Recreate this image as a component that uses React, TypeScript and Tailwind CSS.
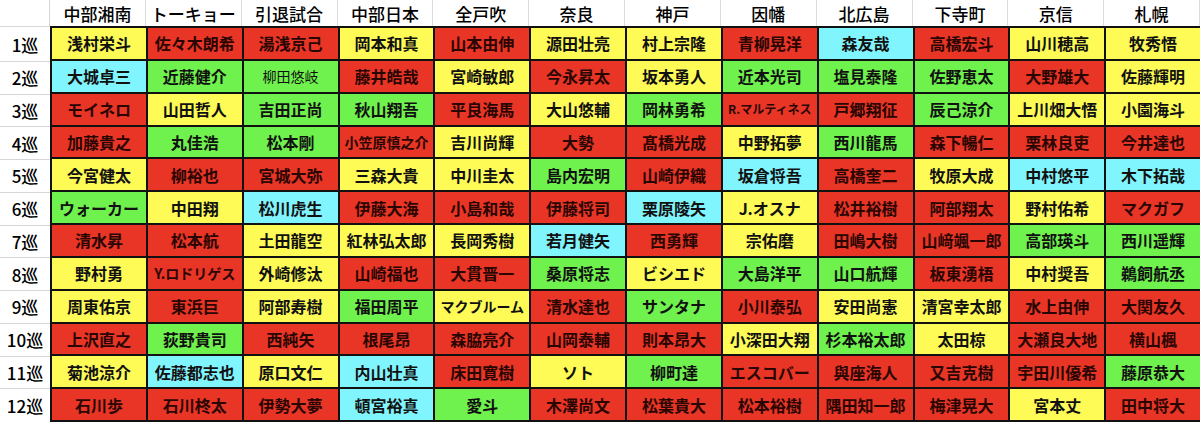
import React from "react";

type C = "Y" | "R" | "G" | "C";
type Cell = [string, C, string?];

const headers = ["中部湘南", "トーキョー", "引退試合", "中部日本", "全戸吹", "奈良", "神戸", "因幡", "北広島", "下寺町", "京信", "札幌"];

const rows: Cell[][] = [
  [["浅村栄斗", "Y"], ["佐々木朗希", "R"], ["湯浅京己", "R"], ["岡本和真", "Y"], ["山本由伸", "R"], ["源田壮亮", "Y"], ["村上宗隆", "Y"], ["青柳晃洋", "R"], ["森友哉", "C"], ["高橋宏斗", "R"], ["山川穂高", "Y"], ["牧秀悟", "Y"]],
  [["大城卓三", "C"], ["近藤健介", "G"], ["柳田悠岐", "G", "s14"], ["藤井皓哉", "R"], ["宮崎敏郎", "Y"], ["今永昇太", "R"], ["坂本勇人", "Y"], ["近本光司", "G"], ["塩見泰隆", "G"], ["佐野恵太", "G"], ["大野雄大", "R"], ["佐藤輝明", "Y"]],
  [["モイネロ", "R"], ["山田哲人", "Y"], ["吉田正尚", "G"], ["秋山翔吾", "G"], ["平良海馬", "R"], ["大山悠輔", "Y"], ["岡林勇希", "G"], ["R.マルティネス", "R", "s12"], ["戸郷翔征", "R"], ["辰己涼介", "G"], ["上川畑大悟", "Y"], ["小園海斗", "Y"]],
  [["加藤貴之", "R"], ["丸佳浩", "G"], ["松本剛", "G"], ["小笠原慎之介", "R", "s13"], ["吉川尚輝", "Y"], ["大勢", "R"], ["髙橋光成", "R"], ["中野拓夢", "Y"], ["西川龍馬", "G"], ["森下暢仁", "R"], ["栗林良吏", "R"], ["今井達也", "R"]],
  [["今宮健太", "Y"], ["柳裕也", "R"], ["宮城大弥", "R"], ["三森大貴", "Y"], ["中川圭太", "Y"], ["島内宏明", "G"], ["山崎伊織", "R"], ["坂倉将吾", "C"], ["高橋奎二", "R"], ["牧原大成", "Y"], ["中村悠平", "C"], ["木下拓哉", "C"]],
  [["ウォーカー", "G"], ["中田翔", "Y"], ["松川虎生", "C"], ["伊藤大海", "R"], ["小島和哉", "R"], ["伊藤将司", "R"], ["栗原陵矢", "C"], ["J.オスナ", "Y"], ["松井裕樹", "R"], ["阿部翔太", "R"], ["野村佑希", "Y"], ["マクガフ", "R"]],
  [["清水昇", "R"], ["松本航", "R"], ["土田龍空", "Y"], ["紅林弘太郎", "Y"], ["長岡秀樹", "Y"], ["若月健矢", "C"], ["西勇輝", "R"], ["宗佑磨", "Y"], ["田嶋大樹", "R"], ["山﨑颯一郎", "R"], ["高部瑛斗", "G"], ["西川遥輝", "G"]],
  [["野村勇", "Y"], ["Y.ロドリゲス", "R", "s14"], ["外崎修汰", "Y"], ["山崎福也", "R"], ["大貫晋一", "R"], ["桑原将志", "G"], ["ビシエド", "Y"], ["大島洋平", "G"], ["山口航輝", "G"], ["板東湧梧", "R"], ["中村奨吾", "Y"], ["鵜飼航丞", "G"]],
  [["周東佑京", "Y"], ["東浜巨", "R"], ["阿部寿樹", "Y"], ["福田周平", "G"], ["マクブルーム", "Y", "s14"], ["清水達也", "R"], ["サンタナ", "G"], ["小川泰弘", "R"], ["安田尚憲", "Y"], ["清宮幸太郎", "Y"], ["水上由伸", "R"], ["大関友久", "R"]],
  [["上沢直之", "R"], ["荻野貴司", "G"], ["西純矢", "R"], ["根尾昂", "R"], ["森脇亮介", "R"], ["山岡泰輔", "R"], ["則本昂大", "R"], ["小深田大翔", "Y"], ["杉本裕太郎", "G"], ["太田椋", "Y"], ["大瀬良大地", "R"], ["横山楓", "R"]],
  [["菊池涼介", "Y"], ["佐藤都志也", "C"], ["原口文仁", "Y"], ["内山壮真", "C"], ["床田寛樹", "R"], ["ソト", "Y"], ["柳町達", "G"], ["エスコバー", "R"], ["與座海人", "R"], ["又吉克樹", "R"], ["宇田川優希", "R"], ["藤原恭大", "G"]],
  [["石川歩", "R"], ["石川柊太", "R"], ["伊勢大夢", "R"], ["頓宮裕真", "C"], ["愛斗", "G"], ["木澤尚文", "R"], ["松葉貴大", "R"], ["松本裕樹", "R"], ["隅田知一郎", "R"], ["梅津晃大", "R"], ["宮本丈", "Y"], ["田中将大", "R"]],
];

const bg: Record<C, string> = {
  Y: "bg-[#fefb56]",
  R: "bg-[#e83526]",
  G: "bg-[#6ff24d]",
  C: "bg-[#81f5fe]",
};

const sizeCls: Record<string, string> = {
  s14: "text-[14px]",
  s12: "text-[12px]",
  s13: "text-[14px]",
};

const font = { fontFamily: '"Noto Sans CJK JP", "Noto Sans", sans-serif' };

export default function App() {
  return (
    <div className="w-[1200px] h-[422px] bg-white overflow-hidden flex flex-col text-black" style={font}>
      {/* header */}
      <div className="flex h-[26px] shrink-0">
        <div className="w-[50px] shrink-0 border-r border-[#d6d6d6]" />
        <div className="flex-1 grid grid-cols-12">
          {headers.map((h) => (
            <div key={h} className="flex items-center justify-center border-r border-[#dcdcdc] text-[17px] font-medium leading-none">
              {h}
            </div>
          ))}
        </div>
      </div>
      {/* body */}
      <div className="flex flex-1">
        <div className="w-[50px] shrink-0 grid grid-rows-12 pt-[2px] border-t border-[#d6d6d6]">
          {rows.map((_, i) => (
            <div key={i} className="flex items-center justify-center text-[17px] font-medium leading-none border-b border-[#d6d6d6] last:border-b-0">
              {i + 1}巡
            </div>
          ))}
        </div>
        <div className="flex-1 grid grid-cols-12 grid-rows-12 gap-[2px] bg-[#111] pl-[2px] pt-[2px] pb-[2px]">
          {rows.flatMap((r, i) =>
            r.map(([name, c, s], j) => (
              <div
                key={`${i}-${j}`}
                className={`flex items-center justify-center leading-none whitespace-nowrap ${bg[c]} ${s ? sizeCls[s] : "text-[16px]"} ${name === "柳田悠岐" ? "font-normal text-[#1c3a10]" : "font-semibold"} ${c === "R" ? "text-[#2a0603]" : "text-[#111]"}`}
              >
                {name}
              </div>
            ))
          )}
        </div>
      </div>
    </div>
  );
}
